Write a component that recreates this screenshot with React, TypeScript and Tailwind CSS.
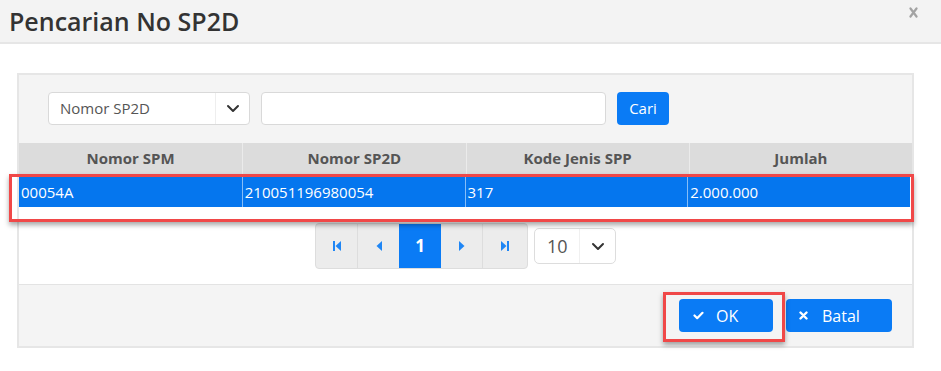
import React from "react";

const font = { fontFamily: '"Open Sans", "Noto Sans", Arial, sans-serif' };

function Chevron({ className = "" }: { className?: string }) {
  return (
    <svg width="14" height="9" viewBox="0 0 14 9" className={className}>
      <path d="M2 2 L7 7 L12 2" fill="none" stroke="#333" strokeWidth="2" strokeLinecap="round" strokeLinejoin="round" />
    </svg>
  );
}

function FirstIcon() {
  return (
    <svg width="8" height="10" viewBox="0 0 8 10">
      <rect x="0" y="0" width="2" height="10" fill="#1f86f5" />
      <path d="M8 0 L2.5 5 L8 10 Z" fill="#1f86f5" />
    </svg>
  );
}
function PrevIcon() {
  return (
    <svg width="6" height="10" viewBox="0 0 6 10">
      <path d="M6 0 L0.5 5 L6 10 Z" fill="#1f86f5" />
    </svg>
  );
}
function NextIcon() {
  return (
    <svg width="6" height="10" viewBox="0 0 6 10">
      <path d="M0 0 L5.5 5 L0 10 Z" fill="#1f86f5" />
    </svg>
  );
}
function LastIcon() {
  return (
    <svg width="8" height="10" viewBox="0 0 8 10">
      <path d="M0 0 L5.5 5 L0 10 Z" fill="#1f86f5" />
      <rect x="6" y="0" width="2" height="10" fill="#1f86f5" />
    </svg>
  );
}

export default function App() {
  const headers = ["Nomor SPM", "Nomor SP2D", "Kode Jenis SPP", "Jumlah"];
  const row = ["00054A", "210051196980054", "317", "2.000.000"];
  return (
    <div className="relative w-[941px] h-[371px] bg-white overflow-hidden" style={font}>
      {/* Modal header */}
      <div className="h-[44px] bg-[#f3f3f3] border-b-2 border-[#e6e6e6] flex items-center justify-between pl-[9px] pr-[23px]">
        <span className="text-[25px] font-semibold text-[#333] leading-none">Pencarian No SP2D</span>
        <svg width="9" height="11" viewBox="0 0 9 11" className="-mt-[18px]">
          <path d="M1.5 1.5 L7.5 9.5 M7.5 1.5 L1.5 9.5" fill="none" stroke="#a3a3a3" strokeWidth="2.2" strokeLinecap="round" />
        </svg>
      </div>

      {/* Body */}
      <div className="pt-[29px] pl-[17px]">
        <div className="w-[897px] border-2 border-[#e6e6e6]">
          {/* Search bar */}
          <div className="bg-[#f4f4f4] pt-[17px] pb-[18px] pl-[29px] flex gap-[11px]">
            <div className="w-[202px] h-[33px] bg-white border border-[#d9d9d9] rounded-[4px] flex items-center">
              <span className="flex-1 pl-[11px] text-[15px] text-[#555]">Nomor SP2D</span>
              <div className="w-[34px] h-full border-l border-[#eeeeee] flex items-center justify-center">
                <Chevron />
              </div>
            </div>
            <div className="w-[345px] h-[33px] bg-white border border-[#d9d9d9] rounded-[4px]" />
            <button className="w-[52px] h-[33px] bg-[#0a7bf5] rounded-[4px] text-white text-[15px] flex items-center justify-center">
              Cari
            </button>
          </div>

          {/* Table header */}
          <div className="grid grid-cols-4 h-[31px] bg-[#dcdcdc]">
            {headers.map((h, i) => (
              <div
                key={h}
                className={`flex items-center justify-center text-[15px] font-bold text-[#555] ${i > 0 ? "border-l border-[#ebebeb]" : ""}`}
              >
                {h}
              </div>
            ))}
          </div>

          {/* Table body */}
          <div className="bg-white pt-[3px] pb-[11px] pr-[2px]">
            <div className="grid grid-cols-4 h-[30px] bg-[#0576ee]">
              {row.map((c, i) => (
                <div
                  key={c}
                  className={`flex items-center pl-[2px] text-[15px] text-white ${i > 0 ? "border-l border-[#86bdf7]" : ""}`}
                >
                  {c}
                </div>
              ))}
            </div>
          </div>

          {/* Pagination */}
          <div className="bg-white pt-[5px] pb-[15px] flex justify-center items-center gap-[6px]">
            <div className="flex h-[46px] border border-[#dddddd] rounded-[4px] overflow-hidden bg-[#ececec]">
              <div className="w-[42px] flex items-center justify-center border-r border-[#dddddd]"><FirstIcon /></div>
              <div className="w-[41px] flex items-center justify-center"><PrevIcon /></div>
              <div className="w-[42px] flex items-center justify-center bg-[#0a7bf5] text-white text-[17px] font-bold">1</div>
              <div className="w-[42px] flex items-center justify-center border-r border-[#dddddd]"><NextIcon /></div>
              <div className="w-[44px] flex items-center justify-center"><LastIcon /></div>
            </div>
            <div className="w-[82px] h-[36px] bg-white border border-[#dddddd] rounded-[5px] flex items-center">
              <span className="flex-1 pl-[12px] text-[18px] text-[#555]">10</span>
              <div className="w-[36px] h-full border-l border-[#f0f0f0] flex items-center justify-center">
                <Chevron />
              </div>
            </div>
          </div>

          {/* Footer */}
          <div className="bg-[#f4f4f4] border-t border-[#e3e3e3] h-[62px] pt-[14px] pr-[20px] flex justify-end gap-[13px]">
            <button className="w-[94px] h-[33px] bg-[#0a7bf5] rounded-[4px] text-white text-[16px] flex items-center justify-start pl-[14px] gap-[12px]">
              <svg width="11" height="9" viewBox="0 0 11 9">
                <path d="M1.5 4.5 L4.2 7.2 L9.5 1.8" fill="none" stroke="white" strokeWidth="2.2" strokeLinecap="round" strokeLinejoin="round" />
              </svg>
              <span>OK</span>
            </button>
            <button className="w-[106px] h-[33px] bg-[#0a7bf5] rounded-[4px] text-white text-[16px] flex items-center justify-start pl-[13px] gap-[14px]">
              <svg width="9" height="9" viewBox="0 0 9 9">
                <path d="M1.5 1.5 L7.5 7.5 M7.5 1.5 L1.5 7.5" fill="none" stroke="white" strokeWidth="2.4" strokeLinecap="round" />
              </svg>
              <span>Batal</span>
            </button>
          </div>
        </div>
      </div>

      {/* Annotation highlights */}
      <div className="absolute left-[9px] top-[174px] w-[905px] h-[48px] border-[3px] border-[#f04848] shadow-[0_3px_5px_rgba(0,0,0,0.35)]" />
      <div className="absolute left-[663px] top-[292px] w-[122px] h-[50px] border-[3px] border-[#f04848] shadow-[0_3px_5px_rgba(0,0,0,0.35)]" />
    </div>
  );
}
